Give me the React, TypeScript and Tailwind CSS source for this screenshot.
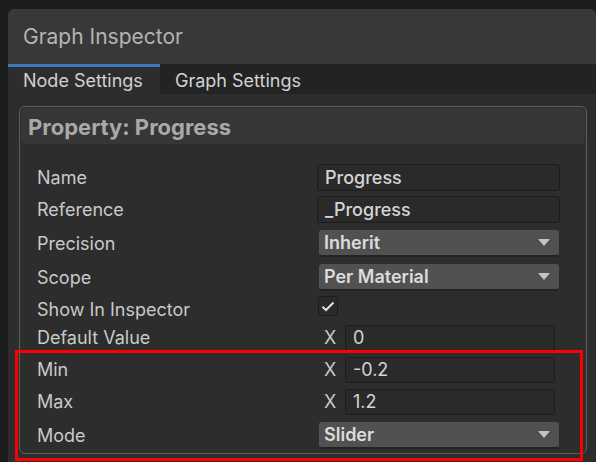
import React from "react";

const Caret = () => (
  <svg width="12" height="7" viewBox="0 0 12 7" className="shrink-0">
    <path d="M0 0 H12 L6 7 Z" fill="#c4c4c4" />
  </svg>
);

const TextField = ({ value, className = "" }: { value: string; className?: string }) => (
  <div
    className={`h-[27px] flex items-center px-[7px] rounded-[3px] bg-[#2a2a2a] border border-[#1c1c1c] text-[18px] font-medium text-[#d4d4d4] ${className}`}
  >
    {value}
  </div>
);

const Dropdown = ({ value }: { value: string }) => (
  <div className="h-[27px] w-[240px] ml-[2px] flex items-center justify-between pl-[5px] pr-[9px] rounded-[3px] bg-[#515151] border-b-2 border-[#232323] text-[18px] font-semibold text-[#dcdcdc]">
    <span>{value}</span>
    <Caret />
  </div>
);

const VecField = ({ value }: { value: string }) => (
  <div className="flex items-center">
    <span className="w-[28px] pl-[7px] text-[18px] text-[#c8c8c8]">X</span>
    <div className="h-[26px] w-[210px] flex items-center px-[7px] rounded-[3px] bg-[#2a2a2a] border border-[#1c1c1c] text-[18px] text-[#d4d4d4]">
      {value}
    </div>
  </div>
);

type Row = { label: string; h: string; field: React.ReactNode };

const rows: Row[] = [
  { label: "Name", h: "h-[32px]", field: <TextField value="Progress" className="w-[243px]" /> },
  { label: "Reference", h: "h-[34px]", field: <TextField value="_Progress" className="w-[243px]" /> },
  { label: "Precision", h: "h-[34px]", field: <Dropdown value="Inherit" /> },
  { label: "Scope", h: "h-[32px]", field: <Dropdown value="Per Material" /> },
  {
    label: "Show In Inspector",
    h: "h-[28px]",
    field: (
      <div className="ml-[1px] w-[20px] h-[20px] rounded-[3px] bg-[#2a2a2a] border border-[#1c1c1c] flex items-center justify-center">
        <svg width="14" height="11" viewBox="0 0 14 11">
          <path d="M1.5 5.8 L5 9 L12.5 1.5" fill="none" stroke="#e2e2e2" strokeWidth="2" />
        </svg>
      </div>
    ),
  },
  { label: "Default Value", h: "h-[32px]", field: <VecField value="0" /> },
  { label: "Min", h: "h-[32px]", field: <VecField value="-0.2" /> },
  { label: "Max", h: "h-[34px]", field: <VecField value="1.2" /> },
  { label: "Mode", h: "h-[30px]", field: <Dropdown value="Slider" /> },
];

export default function App() {
  return (
    <div
      className="w-[596px] h-[462px] overflow-hidden bg-[#1c1c1c] pt-[9px] pl-[8px]"
      style={{ fontFamily: "Inter, 'Noto Sans', sans-serif" }}
    >
      <div className="h-[453px] rounded-t-[6px] overflow-hidden bg-[#2d2d2d] flex flex-col">
        {/* header */}
        <div className="h-[55px] shrink-0 bg-[#383838] flex items-center pl-[15px] text-[21px] text-[#b4b4b4]">
          Graph Inspector
        </div>
        {/* tabs */}
        <div className="h-[30px] shrink-0 bg-[#232323] flex text-[18px] text-[#d2d2d2]">
          <div className="w-[152px] bg-[#2d2d2d] border-t-[3px] border-[#3a79bb] pl-[15px] flex items-center">
            Node Settings
          </div>
          <div className="pl-[15px] flex items-center pt-[3px]">Graph Settings</div>
        </div>
        {/* content */}
        <div className="relative flex-1 pt-[12px] pl-[11px] pr-[9px]">
          <div className="h-[348px] rounded-[6px] border border-[#5e5e5e] p-[1px]">
            <div className="h-[36px] rounded-[5px] bg-[#363636] flex items-center pl-[7px] pt-[2px] text-[22px] font-bold text-[#a9a9a9]">
              Property: Progress
            </div>
            <div className="pt-[20px] pl-[16px]">
              {rows.map((r) => (
                <div key={r.label} className={`flex items-start ${r.h}`}>
                  <div className="w-[280px] h-[27px] flex items-center text-[18px] text-[#c9c9c9]">
                    {r.label}
                  </div>
                  {r.field}
                </div>
              ))}
            </div>
          </div>
          {/* highlight */}
          <div className="absolute left-[7px] top-[256px] w-[568px] h-[111px] border-[3px] border-[#ff0000]" />
        </div>
      </div>
    </div>
  );
}
